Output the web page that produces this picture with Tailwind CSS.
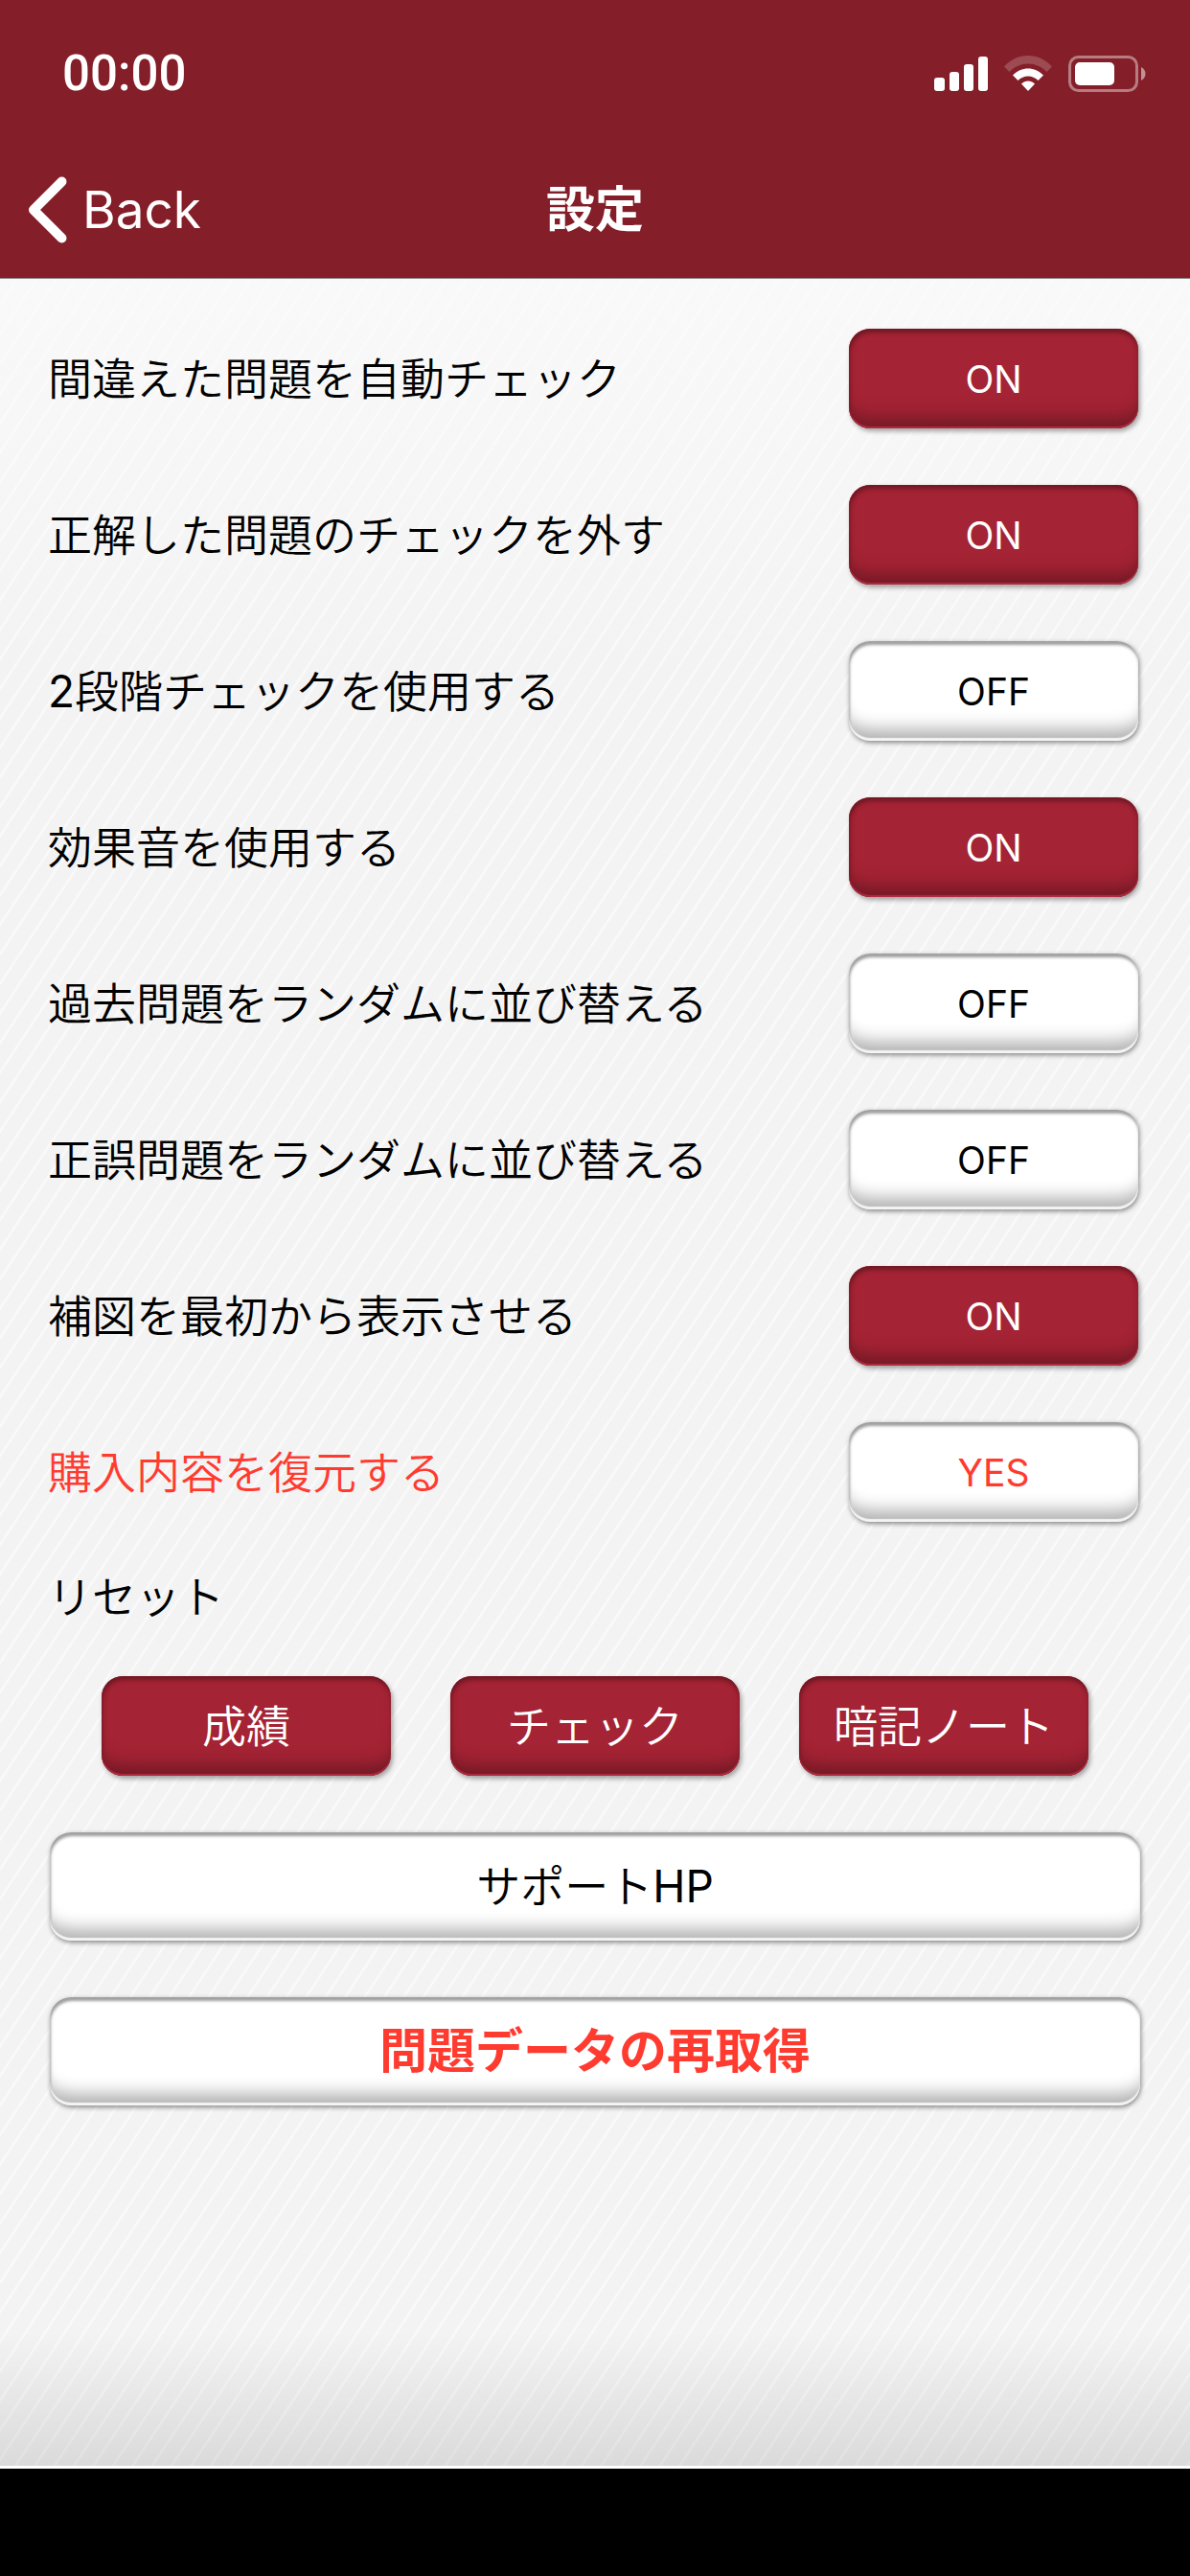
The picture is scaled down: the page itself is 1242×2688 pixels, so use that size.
<!DOCTYPE html>
<html lang="ja">
<head>
    <meta charset="UTF-8">
    <meta name="viewport" content="width=device-width, initial-scale=1.0">
    <title>設定</title>
    <script src="https://cdn.jsdelivr.net/npm/@tailwindcss/browser@4"></script>
</head>
<body class="min-h-screen flex flex-col bg-black text-black text-[46px] leading-[60px] font-[350] font-['Inter','Noto_Sans_CJK_JP',sans-serif]">

    <header class="bg-[#841e28] text-white border-b border-[#8a8a8a]">
        <!--Status bar-->
        <div class="h-[132px] pt-[22px] pl-[65px] pr-[45px] flex items-center justify-between">
            <span class="text-[51px] font-medium font-['Roboto',sans-serif]">00:00</span>
            <div class="flex items-center gap-4">
                <svg class="w-[58px] h-[38px]" viewBox="0 0 58 38" fill="#fff" aria-hidden="true">
                    <rect x="1" y="23" width="11" height="14" rx="3"/>
                    <rect x="17" y="17" width="10" height="20" rx="3"/>
                    <rect x="32" y="9" width="10" height="28" rx="3"/>
                    <rect x="47" y="1" width="10" height="36" rx="3"/>
                </svg>
                <svg class="w-[50px] h-[38px]" viewBox="0 0 50 38" fill="#fff" aria-hidden="true">
                    <path opacity=".2" d="M0 11.500C14-3.800 36-3.800 50 11.500L44.500 17C33.500 5.500 16.500 5.500 5.500 17Z"/>
                    <path d="M9 20.500C18 11 32 11 41 20.500L35.500 26C29.500 20 20.500 20 14.500 26Z"/>
                    <path d="M18 29.500C22 25.500 28 25.500 32 29.500L25 37Z"/>
                </svg>
                <svg class="w-[83px] h-[38px]" viewBox="0 0 83 38" fill="none" aria-hidden="true">
                    <rect x="2.500" y="1.500" width="70" height="35" rx="9" stroke="#fff" stroke-opacity=".42" stroke-width="3"/>
                    <rect x="8" y="7" width="41" height="24" rx="5" fill="#fff"/>
                    <path d="M77 12C83 15 83 23 77 26Z" fill="#fff" fill-opacity=".5"/>
                </svg>
            </div>
        </div>

        <!--Navigation bar-->
        <nav class="h-[158px] pt-4 px-7 grid grid-cols-3 items-center">
            <a href="#" class="flex items-center gap-4 text-[53px] font-normal">
                <svg class="w-[42px] h-[72px]" viewBox="0 0 42 72" fill="none" stroke="#fff" stroke-width="10" stroke-linecap="round" stroke-linejoin="round" aria-hidden="true">
                    <path d="M36.500 6.500L7 36L36.500 65.500"/>
                </svg>
                Back
            </a>
            <h1 class="text-center text-[51px] font-bold">設定</h1>
        </nav>
    </header>

    <main class="grow px-[52px] pt-[52px] border-b-3 border-white bg-[linear-gradient(to_bottom,transparent_calc(100%-140px),rgb(0_0_0/0.1)),repeating-linear-gradient(123.5deg,transparent_0px,transparent_13px,#fbfbfb_15px,transparent_17px),linear-gradient(to_bottom,#f9f9f9,#f3f3f3_400px)]">
        <!--Setting switches-->
        <ul class="-ml-0.5 pr-0.5 flex flex-col gap-[59px]">
            <li class="flex items-center justify-between">
                <label for="auto-check">間違えた問題を自動チェック</label>
                <button id="auto-check" type="button" aria-pressed="true" class="w-[302px] h-[104px] pt-0.5 rounded-[22px] text-[39px] font-normal text-white bg-[#a42334] shadow-[inset_0_-2px_1px_#b02c40,inset_0_-24px_18px_-14px_#701824,inset_1px_4px_4px_#701824,2px_3px_5px_rgb(0_0_0/0.35)]">ON</button>
            </li>
            <li class="flex items-center justify-between">
                <label for="uncheck-correct">正解した問題のチェックを外す</label>
                <button id="uncheck-correct" type="button" aria-pressed="true" class="w-[302px] h-[104px] pt-0.5 rounded-[22px] text-[39px] font-normal text-white bg-[#a42334] shadow-[inset_0_-2px_1px_#b02c40,inset_0_-24px_18px_-14px_#701824,inset_1px_4px_4px_#701824,2px_3px_5px_rgb(0_0_0/0.35)]">ON</button>
            </li>
            <li class="flex items-center justify-between">
                <label for="two-step"><span class="font-normal">2</span>段階チェックを使用する</label>
                <button id="two-step" type="button" aria-pressed="false" class="w-[302px] h-[104px] pt-0.5 rounded-[22px] text-[39px] font-normal bg-white shadow-[inset_0_-3px_1px_#f4f4f4,inset_0_-28px_18px_-16px_#b0b0b0,inset_1px_4px_3px_#a0a0a0,1px_2px_5px_rgb(0_0_0/0.45)]">OFF</button>
            </li>
            <li class="flex items-center justify-between">
                <label for="sound">効果音を使用する</label>
                <button id="sound" type="button" aria-pressed="true" class="w-[302px] h-[104px] pt-0.5 rounded-[22px] text-[39px] font-normal text-white bg-[#a42334] shadow-[inset_0_-2px_1px_#b02c40,inset_0_-24px_18px_-14px_#701824,inset_1px_4px_4px_#701824,2px_3px_5px_rgb(0_0_0/0.35)]">ON</button>
            </li>
            <li class="flex items-center justify-between">
                <label for="shuffle-past">過去問題をランダムに並び替える</label>
                <button id="shuffle-past" type="button" aria-pressed="false" class="w-[302px] h-[104px] pt-0.5 rounded-[22px] text-[39px] font-normal bg-white shadow-[inset_0_-3px_1px_#f4f4f4,inset_0_-28px_18px_-16px_#b0b0b0,inset_1px_4px_3px_#a0a0a0,1px_2px_5px_rgb(0_0_0/0.45)]">OFF</button>
            </li>
            <li class="flex items-center justify-between">
                <label for="shuffle-tf">正誤問題をランダムに並び替える</label>
                <button id="shuffle-tf" type="button" aria-pressed="false" class="w-[302px] h-[104px] pt-0.5 rounded-[22px] text-[39px] font-normal bg-white shadow-[inset_0_-3px_1px_#f4f4f4,inset_0_-28px_18px_-16px_#b0b0b0,inset_1px_4px_3px_#a0a0a0,1px_2px_5px_rgb(0_0_0/0.45)]">OFF</button>
            </li>
            <li class="flex items-center justify-between">
                <label for="show-figure">補図を最初から表示させる</label>
                <button id="show-figure" type="button" aria-pressed="true" class="w-[302px] h-[104px] pt-0.5 rounded-[22px] text-[39px] font-normal text-white bg-[#a42334] shadow-[inset_0_-2px_1px_#b02c40,inset_0_-24px_18px_-14px_#701824,inset_1px_4px_4px_#701824,2px_3px_5px_rgb(0_0_0/0.35)]">ON</button>
            </li>
            <li class="flex items-center justify-between text-[#ff3b30]">
                <label for="restore">購入内容を復元する</label>
                <button id="restore" type="button" class="w-[302px] h-[104px] pt-0.5 rounded-[22px] text-[39px] font-normal bg-white shadow-[inset_0_-3px_1px_#f4f4f4,inset_0_-28px_18px_-16px_#b0b0b0,inset_1px_4px_3px_#a0a0a0,1px_2px_5px_rgb(0_0_0/0.45)]">YES</button>
            </li>
        </ul>

        <!--Reset-->
        <h2 class="-ml-0.5 mt-[48px] font-[350]">リセット</h2>
        <div class="mt-[53px] flex justify-center gap-[62px] text-white">
            <button type="button" class="w-[302px] h-[104px] rounded-[22px] bg-[#a42334] shadow-[inset_0_-2px_1px_#b02c40,inset_0_-24px_18px_-14px_#701824,inset_1px_4px_4px_#701824,2px_3px_5px_rgb(0_0_0/0.35)]">成績</button>
            <button type="button" class="w-[302px] h-[104px] rounded-[22px] bg-[#a42334] shadow-[inset_0_-2px_1px_#b02c40,inset_0_-24px_18px_-14px_#701824,inset_1px_4px_4px_#701824,2px_3px_5px_rgb(0_0_0/0.35)]">チェック</button>
            <button type="button" class="w-[302px] h-[104px] rounded-[22px] bg-[#a42334] shadow-[inset_0_-2px_1px_#b02c40,inset_0_-24px_18px_-14px_#701824,inset_1px_4px_4px_#701824,2px_3px_5px_rgb(0_0_0/0.35)]">暗記ノート</button>
        </div>

        <div class="mt-[59px] flex flex-col gap-[59px]">
            <button type="button" class="w-full h-[113px] pb-0.5 rounded-[22px] bg-white shadow-[inset_0_-3px_1px_#f4f4f4,inset_0_-28px_18px_-16px_#b0b0b0,inset_1px_4px_3px_#a0a0a0,1px_2px_5px_rgb(0_0_0/0.45)]">サポート<span class="font-normal">HP</span></button>
            <button type="button" class="w-full h-[113px] pb-0.5 rounded-[22px] text-[50px] font-bold text-[#ff3b30] bg-white shadow-[inset_0_-3px_1px_#f4f4f4,inset_0_-28px_18px_-16px_#b0b0b0,inset_1px_4px_3px_#a0a0a0,1px_2px_5px_rgb(0_0_0/0.45)]">問題データの再取得</button>
        </div>
    </main>

    <footer class="h-28 bg-black"></footer>
</body>
</html>
